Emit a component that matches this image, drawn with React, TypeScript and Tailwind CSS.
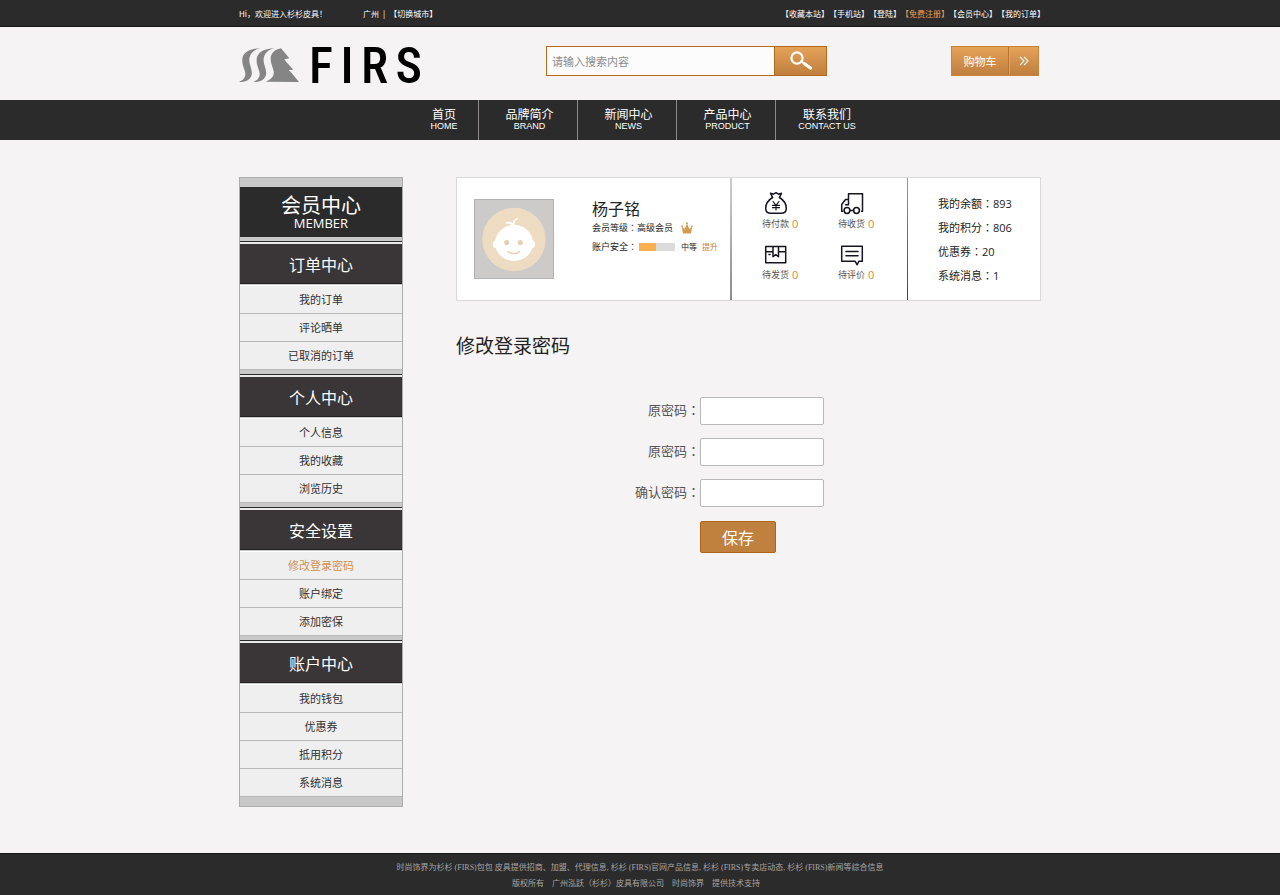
import type { ReactNode } from 'react'

const topLinks = ['收藏本站', '手机站', '登陆', '免费注册', '会员中心', '我的订单']

const navItems = [
    { zh: '首页', en: 'HOME' },
    { zh: '品牌简介', en: 'BRAND' },
    { zh: '新闻中心', en: 'NEWS' },
    { zh: '产品中心', en: 'PRODUCT' },
    { zh: '联系我们', en: 'CONTACT US' },
]

const menuGroups = [
    { title: '订单中心', items: ['我的订单', '评论晒单', '已取消的订单'] },
    { title: '个人中心', items: ['个人信息', '我的收藏', '浏览历史'] },
    { title: '安全设置', items: ['修改登录密码', '账户绑定', '添加密保'] },
    { title: '账户中心', items: ['我的钱包', '优惠券', '抵用积分', '系统消息'] },
]

const stats = [
    { label: '我的余额', value: '893' },
    { label: '我的积分', value: '806' },
    { label: '优惠券', value: '20' },
    { label: '系统消息', value: '1' },
]

const fields = [
    { id: 'old-password', label: '原密码' },
    { id: 'new-password', label: '原密码' },
    { id: 'confirm-password', label: '确认密码' },
]

// the TC face centres the full-width colon in its cell
const Colon = () => <span lang="zh-TW" className="font-['Noto_Sans_CJK_TC',sans-serif]">：</span>

const LineIcon = ({ children }: { children: ReactNode }) => (
    <svg viewBox="0 0 24 24" className="ml-0.5 h-6 w-6" fill="none" stroke="#16141f" strokeWidth="1.5" strokeLinejoin="round" strokeLinecap="round" aria-hidden="true">
        {children}
    </svg>
)

const MoneyBagIcon = () => (
    <LineIcon>
        <path d="M8.500 6.500 6.500 2.200l3 1L12 1.700l2.500 1.500 3-1-2 4.300" />
        <path d="M8.500 6.500C4.500 9 1.700 12.800 1.700 17.200c0 3.400 2 5.100 5.300 5.100h10c3.300 0 5.300-1.700 5.300-5.100 0-4.400-2.800-8.200-6.800-10.700" />
        <path d="m9 10.500 3 3.800 3-3.800M12 14.300V19M8.500 14.300h7M8.500 16.700h7" strokeWidth="1.200" />
    </LineIcon>
)

const TruckIcon = () => (
    <LineIcon>
        <path d="M9.900 19.500h3.700M8.500 8.500V2.700h14v17.500h-1M8.500 8.500H5.500L1.700 13.500v6.700h1M8.500 9.500v4.200H5.500" />
        <circle cx="7" cy="19.500" r="2.900" />
        <circle cx="16.500" cy="19.500" r="2.900" />
    </LineIcon>
)

const BoxIcon = () => (
    <LineIcon>
        <path d="M1.700 4.500h20v16.300h-20zM1.700 9.700h7.300M14.500 9.700h7.200M9 4.500v10.200l2.700-2 2.800 2V4.500M5 12.500h1" />
    </LineIcon>
)

const CommentIcon = () => (
    <LineIcon>
        <path d="M1.700 4.200h20.600v15.100h-3.500l-1.600 3.500-2-3.500H1.700zM6 9.500h12M6 13.800h12" />
    </LineIcon>
)

const orders = [
    { label: '待付款', icon: <MoneyBagIcon /> },
    { label: '待收货', icon: <TruckIcon /> },
    { label: '待发货', icon: <BoxIcon /> },
    { label: '待评价', icon: <CommentIcon /> },
]

const Logo = () => (
    <a href="#" className="mt-2 flex w-[183px] items-center" aria-label="FIRS">
        <svg viewBox="0 0 180 108" className="h-9 w-[60px] shrink-0" fill="#858585" aria-hidden="true">
            <path d="M63 4C38 4 12 14 10 36c-2 26 16 40 6 56-4 8-12 10-16 13 20 1 34-7 38-21 4-18-12-36-6-54C36 16 48 8 63 4Z" />
            <path d="M106 4C81 4 55 14 53 36c-2 26 16 40 6 56-4 8-12 10-16 13 20 1 34-7 38-21 4-18-12-36-6-54 4-14 16-22 31-26Z" />
            <path d="M126 4c-22 4-32 18-31 34 2 24 17 36 5 52-6 8-14 12-20 14l100 1-22-27-9-9 14-1-21-23-6-8 15-3Z" />
        </svg>
        <span className="flex grow justify-between pt-0.5 pl-2.5 font-['Roboto_Condensed','Liberation_Sans',sans-serif] text-[50px] leading-9 font-medium text-black">
            <span>F</span>
            <span>I</span>
            <span>R</span>
            <span>S</span>
        </span>
    </a>
)

const TopBar = () => (
    <div className="h-[27px] border-b border-[#161616] bg-[#2b2b2b] pt-px text-[8px] text-white">
        <div className="mx-auto flex h-full max-w-[802px] items-center justify-between">
            <div className="flex gap-9">
                <span>Hi，欢迎进入杉杉皮具！</span>
                <span className="flex gap-1">
                    <span>广州</span>
                    <span>|</span>
                    <a href="#">【切换城市】</a>
                </span>
            </div>
            <div className="-mr-1 flex">
                {topLinks.map((link) => (
                    <a key={link} href="#" className={link === '免费注册' ? 'text-[#e5a05a]' : ''}>
                        【{link}】
                    </a>
                ))}
            </div>
        </div>
    </div>
)

const Header = () => (
    <header className="mx-auto flex h-[73px] w-full max-w-[802px] items-center justify-between pr-0.5 pb-[5px]">
        <Logo />
        <form className="flex h-[30px] w-[281px]" onSubmit={(e) => e.preventDefault()}>
            <input
                type="text"
                aria-label="搜索"
                placeholder="请输入搜索内容"
                className="min-w-0 grow border border-[#b5691b] bg-[#fcfcfc] px-[5px] text-[11px] placeholder:text-[#8c8c8c]"
            />
            <button type="submit" aria-label="搜索" className="flex w-[52px] items-center justify-center border border-l-0 border-[#b5691b] bg-linear-to-b from-[#e5a259] to-[#c07f3f]">
                <svg viewBox="0 0 24 20" className="h-5 w-6" fill="none" stroke="#fff" strokeLinecap="round" aria-hidden="true">
                    <circle cx="8" cy="7" r="5.600" strokeWidth="2.200" />
                    <path d="m12.500 10.500 2.500 2" strokeWidth="2.200" />
                    <path d="m15.500 12.700 6 4.300" strokeWidth="3.200" />
                </svg>
            </button>
        </form>
        <a href="#" className="flex h-[30px] w-[88px] border border-[#c98438] bg-linear-to-b from-[#e5a259] to-[#c07f3f] text-[11px] text-white">
            <span className="flex grow items-center justify-center border-r border-[#b8742f]">购物车</span>
            <span className="flex w-[29px] items-center justify-center border-l border-[#e5a259]">
                <svg viewBox="0 0 10 10" className="h-2.5 w-2.5" fill="none" stroke="#fff" strokeWidth="1.100" aria-hidden="true">
                    <path d="m1 .8 4 4.200-4 4.200M5 .8l4 4.200-4 4.200" />
                </svg>
            </span>
        </a>
    </header>
)

const Nav = () => (
    <nav className="flex h-10 justify-center bg-[#2b2b2b] pl-[5px] text-white">
        {navItems.map((item) => (
            <a
                key={item.en}
                href="#"
                className="flex w-[99px] flex-col items-center justify-center border-r border-[#8f8a8a] pb-0.5 pl-[3px] first:w-[69px] first:pl-0 last:border-r-0"
            >
                <span className="text-xs leading-[14px]">{item.zh}</span>
                <span className="font-['Liberation_Sans',sans-serif] text-[9px] leading-[10px]">{item.en}</span>
            </a>
        ))}
    </nav>
)

const Sidebar = () => (
    <aside className="w-[164px] shrink-0 border border-[#adadad] bg-[#c8c8c8] py-[9px] text-center">
        <div className="flex h-[50px] flex-col items-center justify-center bg-[#2b2b2b] text-white">
            <span className="text-xl leading-[22px]">会员中心</span>
            <span className="font-['Open_Sans',sans-serif] text-[13px] leading-[14px]">MEMBER</span>
        </div>
        {menuGroups.map((group) => (
            <section key={group.title}>
                <div className="h-[7px] border-b-2 border-[#e9e9e9]">
                    <div className="h-[5px] border-b border-[#2b2b2b]" />
                </div>
                <h2 className="flex h-10 items-center justify-center border-b border-[#222] bg-[#3a3637] text-base text-white">{group.title}</h2>
                <ul className="mt-px border-t border-white">
                    {group.items.map((item) => (
                        <li key={item} className="border-b border-[#b9b9b9] bg-[#efefef]">
                            <a
                                href="#"
                                className={item === '修改登录密码' ? 'block text-[11px] leading-[27px] text-[#d09150]' : 'block text-[11px] leading-[27px] text-[#2f2f2f]'}
                            >
                                {item}
                            </a>
                        </li>
                    ))}
                </ul>
            </section>
        ))}
    </aside>
)

const Avatar = () => (
    <svg viewBox="0 0 80 80" className="h-20 w-20 shrink-0 border border-[#b3b3b3] bg-[#cccbca]" role="img" aria-label="头像">
        <circle cx="40" cy="40.500" r="32.500" fill="#eedcc2" />
        <ellipse cx="40" cy="44" rx="19.500" ry="18.500" fill="#fff" />
        <circle cx="22.500" cy="45.500" r="4.200" fill="#fff" />
        <circle cx="57.500" cy="45.500" r="4.200" fill="#fff" />
        <path d="M39.500 26.500c-.5-3 1-6 4-7.500M39.500 26.500c-1-2.500-4-3.500-7-3" fill="none" stroke="#fff" strokeWidth="1.800" strokeLinecap="round" />
        <circle cx="32.500" cy="43.500" r="2.600" fill="#e3cfb1" />
        <circle cx="46.500" cy="43.500" r="2.600" fill="#e3cfb1" />
        <path d="M34 53c3 2.500 8.500 2.500 11.500 0" fill="none" stroke="#e3cfb1" strokeWidth="1.400" strokeLinecap="round" />
    </svg>
)

const ProfileCard = () => (
    <section className="flex h-[124px] border border-[#d9d9d9] bg-white text-[#222]">
        <div className="flex grow pt-[21px] pl-[17px]">
            <Avatar />
            <div className="ml-[38px]">
                <p className="text-base leading-[18px]">杨子铭</p>
                <p className="mt-px flex h-5 items-center text-[9px]">
                    会员等级
                    <Colon />
                    高级会员
                    <svg viewBox="0 0 12 12" className="ml-2 h-3 w-3" fill="#d39a50" aria-hidden="true">
                        <path d="M2 11.500.8 4.600 3.700 7 6 1.500 8.300 7l2.900-2.400L10 11.500Z" />
                        <circle cx="1" cy="4.300" r=".9" />
                        <circle cx="6" cy="1.300" r="1" />
                        <circle cx="11" cy="4.300" r=".9" />
                    </svg>
                </p>
                <p className="flex h-[18px] items-center text-[9px]">
                    账户安全
                    <Colon />
                    <span className="mr-1.5 ml-0.5 flex h-2 w-9 bg-[#dcdbdc]">
                        <span className="w-[17px] bg-[#fbb04f]" />
                    </span>
                    <span className="text-[8px]">中等</span>
                    <a href="#" className="ml-[5px] text-[8px] text-[#cd7f3c]">提升</a>
                </p>
            </div>
        </div>
        <div className="w-0.5 bg-linear-to-b from-[#cfcfcf] to-[#8b8b8b]" />
        <ul className="grid w-[175px] grid-cols-[76px_auto] content-start pt-[13px] pl-[30px]">
            {orders.map((order) => (
                <li key={order.label} className="flex h-[51px] flex-col items-start">
                    {order.icon}
                    <a href="#" className="flex items-center gap-[3px] pt-px text-[9px] leading-4 text-[#555]">
                        {order.label}
                        <span className="font-['Open_Sans',sans-serif] text-[11px] text-[#d08a45]">0</span>
                    </a>
                </li>
            ))}
        </ul>
        <div className="w-px bg-linear-to-b from-[#999] to-[#444]" />
        <ul className="w-[132px] pt-[13px] pl-[30px] text-[11px] leading-6">
            {stats.map((stat) => (
                <li key={stat.label} className="h-6">
                    {stat.label}
                    <Colon />
                    <span className="font-['Open_Sans',sans-serif]">{stat.value}</span>
                </li>
            ))}
        </ul>
    </section>
)

const PasswordForm = () => (
    <form className="mt-[39px]" onSubmit={(e) => e.preventDefault()}>
        {fields.map((field) => (
            <div key={field.id} className="mb-[13px] flex h-7 items-center">
                <label htmlFor={field.id} className="w-[244px] pb-0.5 text-right text-[13px] text-[#555]">
                    {field.label}
                    <Colon />
                </label>
                <input id={field.id} type="password" className="h-7 w-[124px] rounded-xs border border-[#b9b9b9] bg-white px-1 text-[13px]" />
            </div>
        ))}
        <button type="submit" className="mt-px ml-[244px] h-8 w-[76px] rounded-xs border border-[#ad6514] bg-[#c1813e] text-base text-white">
            保存
        </button>
    </form>
)

const Footer = () => (
    <footer className="border-t border-[#161616] bg-[#2b2b2b] pt-1.5 pb-[3px] text-center font-['Liberation_Serif','Noto_Sans_CJK_SC',serif] text-[8px] leading-4 text-[#a5a5a5]">
        <p>时尚饰界为杉杉 (FIRS)包包 皮具提供招商、加盟、代理信息, 杉杉 (FIRS)官网产品信息, 杉杉 (FIRS)专卖店动态, 杉杉 (FIRS)新闻等综合信息</p>
        <p className="pr-2">版权所有　广州泓跃（杉杉）皮具有限公司　时尚饰界　提供技术支持</p>
    </footer>
)

export default function App() {
    return (
        <div lang="zh-CN" className="flex min-h-screen flex-col bg-[#f5f3f4] font-['Noto_Sans_CJK_SC',sans-serif]">
            <TopBar />
            <Header />
            <Nav />
            <div className="mx-auto flex w-full max-w-[802px] grow items-start gap-[53px] pt-[37px] pb-[46px]">
                <Sidebar />
                <main className="min-w-0 grow">
                    <ProfileCard />
                    <h1 className="mt-[31px] text-[19px] leading-[26px] text-[#222]">修改登录密码</h1>
                    <PasswordForm />
                </main>
            </div>
            <Footer />
        </div>
    )
}
